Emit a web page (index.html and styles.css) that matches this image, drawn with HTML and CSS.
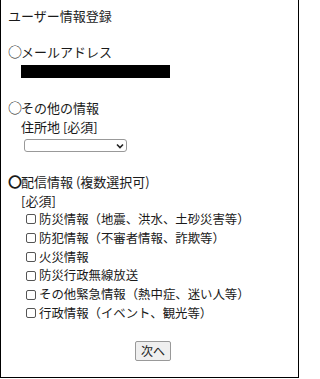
FILE: index.html
```html
<!DOCTYPE html>
<html lang="ja">
<head>
<meta charset="utf-8">
<title>ユーザー情報登録</title>
<link rel="stylesheet" href="styles.css">
</head>
<body>
<div class="frame">
  <div class="title">ユーザー情報登録</div>

  <div class="section first">
    <div class="heading"><span class="mark">○</span>メールアドレス</div>
    <div class="redacted"></div>
  </div>

  <div class="section">
    <div class="heading"><span class="mark">○</span>その他の情報</div>
    <div class="label">住所地 [必須]</div>
    <div class="select-wrap">
      <select class="select"><option></option></select>
      <svg class="chev" width="8" height="6" viewBox="0 0 8 6"><path d="M1 1.5 L4 4.5 L7 1.5" fill="none" stroke="#222" stroke-width="1.6"/></svg>
    </div>
  </div>

  <div class="section">
    <div class="heading"><span class="mark bold">〇</span>配信情報 (複数選択可)</div>
    <div class="label">[必須]</div>
    <ul class="checks">
      <li><input type="checkbox" class="cb">防災情報（地震、洪水、土砂災害等）</li>
      <li><input type="checkbox" class="cb">防犯情報（不審者情報、詐欺等）</li>
      <li><input type="checkbox" class="cb">火災情報</li>
      <li><input type="checkbox" class="cb">防災行政無線放送</li>
      <li><input type="checkbox" class="cb">その他緊急情報（熱中症、迷い人等）</li>
      <li><input type="checkbox" class="cb">行政情報（イベント、観光等）</li>
    </ul>
  </div>

  <div class="actions">
    <button class="btn" type="button">次へ</button>
  </div>
</div>
</body>
</html>
```

FILE: styles.css
```css
html, body {
  margin: 0;
  padding: 0;
  background: #fff;
}
body {
  font-family: "Noto Sans CJK JP", "Noto Sans", sans-serif;
  color: #1a1a1a;
  font-size: 13px;
  line-height: 19px;
}
.frame {
  box-sizing: border-box;
  width: 299px;
  height: 378px;
  border-left: 1px solid #000;
  border-right: 1px solid #000;
  border-bottom: 1px solid #000;
  padding: 6px 0 0 7px;
}
.title {
  line-height: 19px;
}
.section {
  margin-top: 20px;
}
.section.first {
  margin-top: 17px;
}
.heading {
  display: flex;
  align-items: center;
}
.mark {
  display: inline-block;
  width: 13px;
  font-size: 14px;
  margin-left: 0;
}
.mark.bold {
  font-weight: bold;
}
.redacted {
  margin: 4px 0 0 13px;
  width: 149px;
  height: 13px;
  background: #000;
}
.label {
  margin-left: 13px;
}
.select-wrap {
  position: relative;
  margin: 3px 0 0 16px;
  width: 103px;
  height: 13px;
}
.select {
  -webkit-appearance: none;
  appearance: none;
  box-sizing: border-box;
  width: 103px;
  height: 13px;
  border: 1px solid #999;
  border-radius: 3px;
  background: #fff;
  padding: 0;
  margin: 0;
  font-size: 10px;
  display: block;
}
.chev {
  position: absolute;
  right: 3px;
  top: 4px;
}
.checks {
  list-style: none;
  margin: 0;
  padding: 0 0 0 17px;
  font-size: 12.4px;
  line-height: 18.8px;
}
.checks li {
  display: flex;
  align-items: center;
}
.cb {
  -webkit-appearance: none;
  appearance: none;
  box-sizing: border-box;
  width: 10px;
  height: 10px;
  border: 1px solid #555;
  border-radius: 2px;
  background: #fff;
  margin: 0 3px 0 1px;
  flex: none;
}
.actions {
  display: flex;
  justify-content: center;
  margin-top: 18px;
}
.btn {
  font-family: "Noto Sans CJK JP", sans-serif;
  font-size: 12px;
  line-height: 16px;
  height: 20px;
  padding: 1px 5px;
  color: #222;
  background: #efefef;
  border: 1px solid #999;
  border-radius: 2px;
}
```
